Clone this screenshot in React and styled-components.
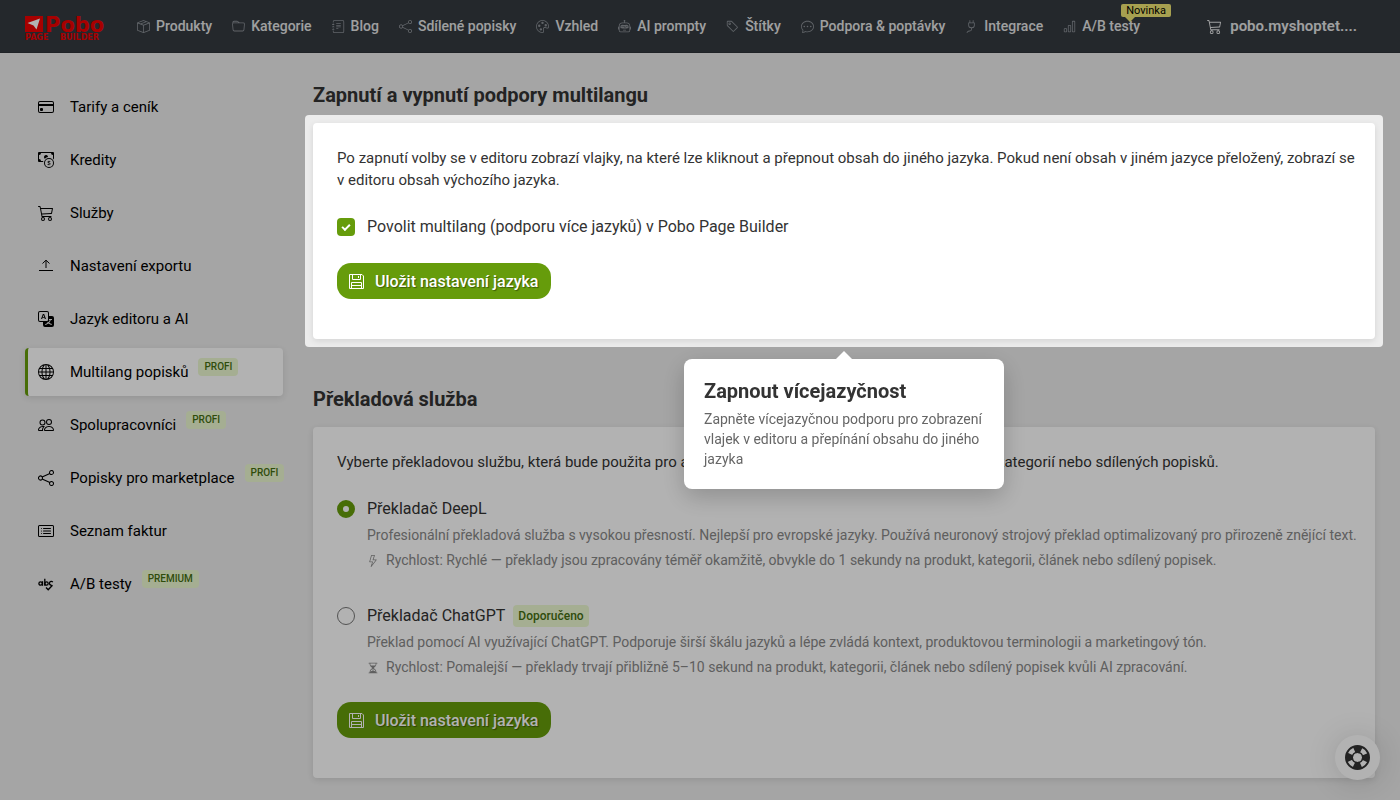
import React from 'react';
import styled, { createGlobalStyle } from 'styled-components';
import {
  BsBoxSeam,
  BsFolder,
  BsJournalText,
  BsShare,
  BsPalette,
  BsRobot,
  BsTag,
  BsChatDots,
  BsPlug,
  BsBarChart,
  BsCart3,
  BsCreditCard,
  BsCashCoin,
  BsTranslate,
  BsGlobe,
  BsPeople,
  BsCardList,
  BsLightning,
  BsHourglassSplit,
} from 'react-icons/bs';

const GlobalStyle = createGlobalStyle`
  *, *::before, *::after {
    box-sizing: border-box;
  }

  body {
    margin: 0;
    background: #ececec;
    color: #333;
    font-family: Roboto, 'Liberation Sans', sans-serif;
    font-size: 15px;
    line-height: 22px;
    overflow-x: hidden;
  }

  h1, h2, h3, p, ul {
    margin: 0;
    padding: 0;
  }

  a {
    color: inherit;
    text-decoration: none;
  }

  svg {
    flex-shrink: 0;
  }
`;

const Header = styled.header`
  display: flex;
  align-items: center;
  height: 53px;
  padding: 0 25px;
  border-bottom: 1px solid #2e3339;
  background: #343a40;
  color: #fff;
`;

const Logo = styled.a`
  display: flex;
  margin-right: 30px;
`;

const Nav = styled.nav`
  display: flex;
  align-items: center;
  gap: 20px;
`;

const NavLink = styled.a`
  position: relative;
  display: flex;
  align-items: center;
  gap: 6px;
  font-size: 14px;
  font-weight: 500;
  color: #e4e5e6;
  white-space: nowrap;

  svg {
    width: 13px;
    height: 13px;
    color: #8b9096;
  }
`;

const NewBadge = styled.span`
  position: absolute;
  left: 58px;
  bottom: 20px;
  padding: 0 5px;
  border-radius: 2px;
  background: #efe673;
  color: #000;
  font-size: 11px;
  font-weight: 400;
  line-height: 13px;

  &::after {
    content: '';
    position: absolute;
    top: 100%;
    left: 4px;
    border: 5px solid transparent;
    border-top-color: #efe673;
    border-bottom: 0;
  }
`;

const ShopLink = styled.a`
  display: flex;
  align-items: center;
  gap: 8px;
  margin-left: auto;
  margin-right: 18px;
  font-weight: 600;
  color: #e4e5e6;
`;

const Page = styled.div`
  display: grid;
  grid-template-columns: 258px minmax(0, 1fr);
  gap: 30px;
  padding: 30px 25px 22px;
`;

const Sidebar = styled.nav`
  display: flex;
  flex-direction: column;
  gap: 5px;
`;

const SideLink = styled.a`
  display: flex;
  align-items: center;
  height: 48px;
  padding-left: 10px;
  border-left: 3px solid ${(p) => (p.$active ? '#669c0b' : 'transparent')};
  border-radius: 4px;
  background: ${(p) => (p.$active ? '#fff' : 'transparent')};
  box-shadow: ${(p) => (p.$active ? '0 2px 6px rgba(0, 0, 0, 0.1)' : 'none')};
  color: #000;
  white-space: nowrap;

  svg {
    width: 16px;
    height: 16px;
    margin-right: 16px;
  }
`;

const Badge = styled.span`
  align-self: flex-start;
  margin: 10px 0 0 10px;
  padding: 0 6px;
  border-radius: 4px;
  background: #edfad2;
  color: #446e10;
  font-size: 10px;
  font-weight: 500;
  line-height: 18px;
`;

const Main = styled.main`
  display: flex;
  flex-direction: column;
  gap: 48px;
`;

const Title = styled.h2`
  margin-bottom: 16px;
  font-size: 20px;
  font-weight: 700;
  line-height: 24px;
`;

const Card = styled.section`
  position: relative;
  padding: 24px 12px 40px 24px;
  border-radius: 4px;
  background: #fff;
  box-shadow: 0 2px 6px rgba(0, 0, 0, 0.1);
`;

// Dims everything around the highlighted card
const Spotlight = styled.div`
  position: absolute;
  inset: -8px;
  z-index: 10;
  border-radius: 4px;
  box-shadow: 0 0 0 9999px rgba(0, 0, 0, 0.3);
  pointer-events: none;
`;

const Popover = styled.div`
  position: absolute;
  top: calc(100% + 20px);
  left: 50%;
  z-index: 20;
  width: 320px;
  margin-left: -160px;
  padding: 20px;
  border-radius: 8px;
  background: #fff;
  box-shadow: 0 8px 24px rgba(0, 0, 0, 0.2);

  &::before {
    content: '';
    position: absolute;
    bottom: 100%;
    left: 50%;
    margin-left: -8px;
    border: 8px solid transparent;
    border-top: 0;
    border-bottom-color: #fff;
  }
`;

const PopoverTitle = styled.h3`
  margin-bottom: 6px;
  font-size: 20px;
  font-weight: 700;
  line-height: 24px;
`;

const PopoverText = styled.p`
  font-size: 14px;
  line-height: 20px;
  color: #666;
`;

const Choice = styled.label`
  display: flex;
  align-items: center;
  gap: 12px;
  margin-top: ${(p) => p.$top || 24}px;
  font-size: 16px;
  line-height: 24px;
`;

const Checkbox = styled.input`
  appearance: none;
  display: grid;
  place-items: center;
  width: 18px;
  height: 18px;
  margin: 0;
  border: 1px solid #777;
  border-radius: 4px;

  &:checked {
    border: 0;
    background: #669c0b;
  }

  &:checked::after {
    content: '';
    width: 8px;
    height: 5px;
    margin-top: -2px;
    border: solid #fff;
    border-width: 0 0 2px 2px;
    transform: rotate(-45deg);
  }
`;

const Radio = styled.input`
  appearance: none;
  width: 18px;
  height: 18px;
  margin: 0;
  border: 1px solid #777;
  border-radius: 50%;
  background: #fff;

  &:checked {
    border: 6px solid #669c0b;
  }
`;

const Recommended = styled.span`
  margin-left: -4px;
  padding: 0 5px;
  border-radius: 4px;
  background: #edfad2;
  color: #446e10;
  font-size: 12px;
  font-weight: 500;
  line-height: 22px;
`;

const Details = styled.div`
  margin: 2px 0 0 30px;
  font-size: 14px;
  line-height: 25px;
  color: #888;
`;

const Speed = styled.p`
  display: flex;
  align-items: center;
  gap: 7px;

  svg {
    width: 12px;
    height: 12px;
  }
`;

const SaveButton = styled.button`
  display: flex;
  align-items: center;
  gap: 11px;
  height: 36px;
  margin-top: ${(p) => p.$top || 24}px;
  padding: 0 12px;
  border: 0;
  border-radius: 14px;
  background: #669c0b;
  color: #fff;
  font-family: inherit;
  font-size: 16px;
  font-weight: 500;
  text-shadow: 1px 1px 1px rgba(0, 0, 0, 0.4);
  cursor: pointer;
`;

const HelpButton = styled.button`
  position: fixed;
  right: 20px;
  bottom: 20px;
  display: grid;
  place-items: center;
  width: 45px;
  height: 45px;
  padding: 0;
  border: 0;
  border-radius: 50%;
  background: #fff;
  color: #333;
  box-shadow: 0 2px 30px rgba(0, 0, 0, 0.15);
`;

const LogoMark = () => (
  <svg width="82" height="30" viewBox="0 -5 82 30" role="img" aria-label="Pobo Page Builder">
    <rect width="18" height="16" fill="#f00000" />
    <path d="M2.500 7L15 2.500L11.500 13.500L8.500 9.500z" fill="#fff" />
    <g fill="#f00000" fontFamily="DejaVu Sans, sans-serif" fontWeight="700">
      <text x="20" y="16" fontSize="21">Pobo</text>
      <text x="0" y="24" fontSize="8">PAGE</text>
      <text x="35" y="24" fontSize="8">BUILDER</text>
    </g>
  </svg>
);

const SaveIcon = () => (
  <svg width="15" height="15" viewBox="0 0 15 15" fill="none" stroke="currentColor">
    <path d="M.5.5h12.500l1.500 1.500v12.500H.5zM3.500.5v5h8v-5M9.500 2v2M2.500 14.500v-6h10v6M2.500 11.500h10" />
  </svg>
);

const ExportIcon = () => (
  <svg viewBox="0 0 16 16" fill="none" stroke="currentColor">
    <path d="M1 12.500h14M8 10V2.500M4.500 5.500L8 2.200l3.500 3.300" />
  </svg>
);

const SpellIcon = () => (
  <svg viewBox="0 0 16 16" fill="none" stroke="currentColor" strokeWidth="1.300">
    <circle cx="2.600" cy="7.500" r="1.700" />
    <path d="M4.500 5.200v4.600M6.800 2.800v7M14.800 6.100a1.900 1.900 0 1 0-1.200 3.100M8 11.500l2.200 2.300 4.300-4.500" />
    <circle cx="8.500" cy="7.500" r="1.700" />
  </svg>
);

const LifebuoyIcon = () => (
  <svg width="25" height="25" viewBox="0 0 25 25" fill="none" stroke="currentColor">
    <circle cx="12.500" cy="12.500" r="11.500" strokeWidth="2" />
    <circle cx="12.500" cy="12.500" r="8" strokeWidth="7" strokeDasharray="7 5.566" strokeDashoffset="3.500" />
    <circle cx="12.500" cy="12.500" r="5.300" strokeWidth="1.500" />
  </svg>
);

const navItems = [
  { label: 'Produkty', icon: BsBoxSeam },
  { label: 'Kategorie', icon: BsFolder },
  { label: 'Blog', icon: BsJournalText },
  { label: 'Sdílené popisky', icon: BsShare },
  { label: 'Vzhled', icon: BsPalette },
  { label: 'AI prompty', icon: BsRobot },
  { label: 'Štítky', icon: BsTag },
  { label: 'Podpora & poptávky', icon: BsChatDots },
  { label: 'Integrace', icon: BsPlug },
  { label: 'A/B testy', icon: BsBarChart, badge: 'Novinka' },
];

const sideItems = [
  { label: 'Tarify a ceník', icon: BsCreditCard },
  { label: 'Kredity', icon: BsCashCoin },
  { label: 'Služby', icon: BsCart3 },
  { label: 'Nastavení exportu', icon: ExportIcon },
  { label: 'Jazyk editoru a AI', icon: BsTranslate },
  { label: 'Multilang popisků', icon: BsGlobe, badge: 'PROFI', active: true },
  { label: 'Spolupracovníci', icon: BsPeople, badge: 'PROFI' },
  { label: 'Popisky pro marketplace', icon: BsShare, badge: 'PROFI' },
  { label: 'Seznam faktur', icon: BsCardList },
  { label: 'A/B testy', icon: SpellIcon, badge: 'PREMIUM' },
];

const App = () => {
  return (
    <>
      <GlobalStyle />
      <Header>
        <Logo href="#">
          <LogoMark />
        </Logo>
        <Nav>
          {navItems.map(({ label, icon: Icon, badge }) => (
            <NavLink href="#" key={label}>
              <Icon />
              {label}
              {badge && <NewBadge>{badge}</NewBadge>}
            </NavLink>
          ))}
        </Nav>
        <ShopLink href="#">
          <BsCart3 size={15} />
          pobo.myshoptet....
        </ShopLink>
      </Header>

      <Page>
        <Sidebar>
          {sideItems.map(({ label, icon: Icon, badge, active }) => (
            <SideLink href="#" key={label} $active={active}>
              <Icon />
              {label}
              {badge && <Badge>{badge}</Badge>}
            </SideLink>
          ))}
        </Sidebar>

        <Main>
          <div>
            <Title>Zapnutí a vypnutí podpory multilangu</Title>
            <Card>
              <p>
                Po zapnutí volby se v editoru zobrazí vlajky, na které lze kliknout a přepnout obsah do jiného jazyka.
                Pokud není obsah v jiném jazyce přeložený, zobrazí se v&nbsp;editoru obsah výchozího jazyka.
              </p>
              <Choice>
                <Checkbox type="checkbox" defaultChecked />
                Povolit multilang (podporu více jazyků) v Pobo Page Builder
              </Choice>
              <SaveButton type="button">
                <SaveIcon />
                Uložit nastavení jazyka
              </SaveButton>
              <Spotlight />
              <Popover role="dialog" aria-labelledby="popover-title">
                <PopoverTitle id="popover-title">Zapnout vícejazyčnost</PopoverTitle>
                <PopoverText>
                  Zapněte vícejazyčnou podporu pro zobrazení vlajek v editoru a přepínání obsahu do jiného jazyka
                </PopoverText>
              </Popover>
            </Card>
          </div>

          <div>
            <Title>Překladová služba</Title>
            <Card>
              <p>
                Vyberte překladovou službu, která bude použita pro automatické překlady obsahu produktů, článků,
                kategorií nebo sdílených popisků.
              </p>
              <Choice>
                <Radio type="radio" name="translator" defaultChecked />
                Překladač DeepL
              </Choice>
              <Details>
                <p>
                  Profesionální překladová služba s vysokou přesností. Nejlepší pro evropské jazyky. Používá neuronový
                  strojový překlad optimalizovaný pro přirozeně znějící text.
                </p>
                <Speed>
                  <BsLightning />
                  Rychlost: Rychlé — překlady jsou zpracovány téměř okamžitě, obvykle do 1 sekundy na produkt,
                  kategorii, článek nebo sdílený popisek.
                </Speed>
              </Details>
              <Choice $top={31}>
                <Radio type="radio" name="translator" />
                Překladač ChatGPT
                <Recommended>Doporučeno</Recommended>
              </Choice>
              <Details>
                <p>
                  Překlad pomocí AI využívající ChatGPT. Podporuje širší škálu jazyků a lépe zvládá kontext,
                  produktovou terminologii a marketingový tón.
                </p>
                <Speed>
                  <BsHourglassSplit />
                  Rychlost: Pomalejší — překlady trvají přibližně 5–10 sekund na produkt, kategorii, článek nebo
                  sdílený popisek kvůli AI zpracování.
                </Speed>
              </Details>
              <SaveButton type="button" $top={22}>
                <SaveIcon />
                Uložit nastavení jazyka
              </SaveButton>
            </Card>
          </div>
        </Main>
      </Page>

      <HelpButton type="button" aria-label="Nápověda">
        <LifebuoyIcon />
      </HelpButton>
    </>
  );
};

export default App;
